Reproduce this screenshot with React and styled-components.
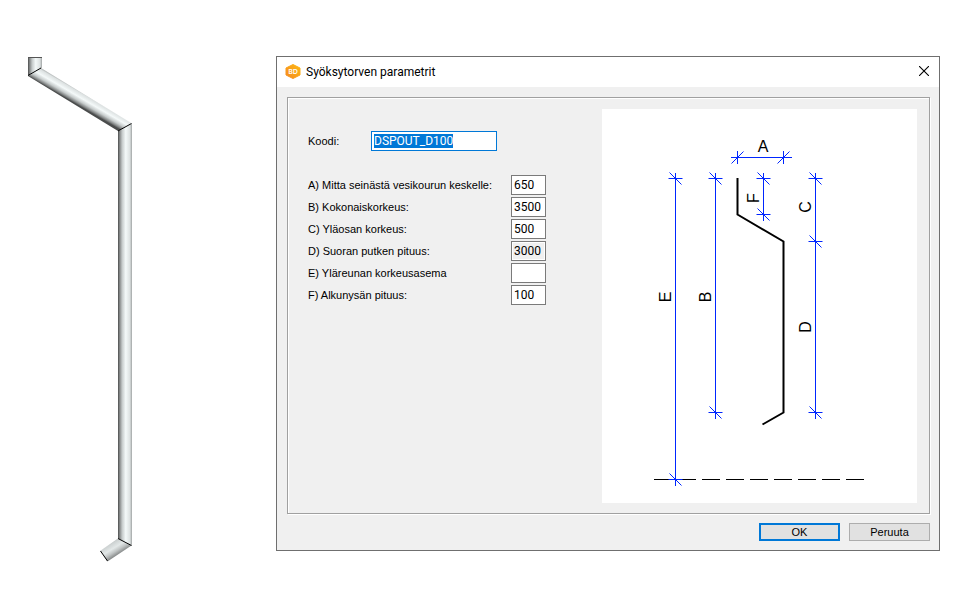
import React, { useEffect, useRef } from "react";
import styled, { createGlobalStyle } from "styled-components";

const GlobalStyle = createGlobalStyle`
  * { box-sizing: border-box; }
  body { margin: 0; background: #ffffff; color: #000000; }
  body, button, input { font-family: "Liberation Sans", Arial, sans-serif; }
`;

const Page = styled.main`
  display: flex;
  align-items: flex-start;
  gap: 144px;
  padding: 56px 27px 24px 28px;
`;

const Pipe = styled.svg`
  flex: none;
  width: 104px;
  height: 506px;
  overflow: visible;
`;

const Dialog = styled.section`
  flex: 1;
  min-width: 0;
  border: 1px solid #6f6f6f;
  background: #f0f0f0;
`;

const TitleBar = styled.header`
  display: flex;
  align-items: center;
  height: 30px;
  padding: 0 8px;
  gap: 5px;
  background: #ffffff;
`;

const Title = styled.h1`
  flex: 1;
  margin: 0;
  font-family: "Roboto", sans-serif;
  font-size: 12px;
  line-height: 16px;
  font-weight: 400;
`;

const AppIcon = styled.svg`
  width: 16px;
  height: 16px;
`;

const CloseButton = styled.button`
  display: flex;
  align-items: center;
  justify-content: center;
  width: 14px;
  height: 16px;
  padding: 0 0 2px;
  border: 0;
  background: transparent;
`;

const Group = styled.div`
  display: flex;
  justify-content: space-between;
  margin: 10px 9px 0 10px;
  padding: 11px 12px 10px 20px;
  border: 1px solid #a0a0a0;
  box-shadow: 1px 1px 0 #ffffff, inset 1px 1px 0 #ffffff;
`;

const Form = styled.form`
  display: flex;
  flex-direction: column;
  gap: 24px;
  padding-top: 22px;
`;

const CodeRow = styled.div`
  display: grid;
  grid-template-columns: 63px 126px;
  align-items: center;
`;

const Fields = styled.div`
  display: grid;
  gap: 2px;
`;

const FieldRow = styled.div`
  display: grid;
  grid-template-columns: 203px 35px;
  align-items: center;
`;

const Label = styled.label`
  font-size: 11px;
  line-height: 16px;
  white-space: nowrap;
`;

const TextBox = styled.input`
  width: 100%;
  height: 20px;
  padding: 0 2px;
  border: 1px solid ${(p) => (p.$active ? "#0078d7" : "#7a7a7a")};
  border-radius: 0;
  outline: 0;
  background: ${(p) => (p.readOnly ? "#f0f0f0" : "#ffffff")};
  box-shadow: ${(p) => (p.readOnly ? "inset 0 0 0 1px #ffffff" : "none")};
  color: #000000;
  font-family: "Roboto", sans-serif;
  font-size: 12px;
  line-height: 16px;

  &::selection {
    background: #0078d7;
    color: #ffffff;
  }
`;

const Diagram = styled.svg`
  flex: none;
  width: 315px;
  height: 394px;
  background: #ffffff;
`;

const DiagramText = styled.text`
  font-family: "Liberation Sans", sans-serif;
  font-size: 16px;
  text-anchor: middle;
`;

const Footer = styled.footer`
  display: flex;
  justify-content: flex-end;
  gap: 9px;
  padding: 9px;
`;

const PushButton = styled.button`
  width: 81px;
  height: 18px;
  padding: 0;
  border: ${(p) => (p.$primary ? "2px solid #0078d7" : "1px solid #adadad")};
  background: #e1e1e1;
  color: #000000;
  font-size: 11px;
  line-height: 14px;
`;

const fields = [
  { id: "a", label: "A) Mitta seinästä vesikourun keskelle:", value: "650" },
  { id: "b", label: "B) Kokonaiskorkeus:", value: "3500" },
  { id: "c", label: "C) Yläosan korkeus:", value: "500" },
  { id: "d", label: "D) Suoran putken pituus:", value: "3000", readOnly: true },
  { id: "e", label: "E) Yläreunan korkeusasema", value: "" },
  { id: "f", label: "F) Alkunysän pituus:", value: "100" },
];

const verticalDimensions = [
  { x: 73, stops: [69, 370] },
  { x: 113, stops: [69, 303] },
  { x: 161, stops: [69, 105] },
  { x: 213, stops: [69, 132, 303] },
];

const letters = [
  { text: "F", x: 157, y: 89 },
  { text: "C", x: 209, y: 98 },
  { text: "E", x: 69, y: 188 },
  { text: "B", x: 109, y: 188 },
  { text: "D", x: 209, y: 218 },
];

function MetalStops() {
  return (
    <>
      <stop offset="0" stopColor="#4a4c4c" />
      <stop offset="0.12" stopColor="#858888" />
      <stop offset="0.3" stopColor="#c6cbcb" />
      <stop offset="0.55" stopColor="#f4f9f9" />
      <stop offset="0.85" stopColor="#dce1e1" />
      <stop offset="1" stopColor="#a0a4a4" />
    </>
  );
}

function Downspout() {
  return (
    <Pipe viewBox="28 56 104 506" role="img" aria-label="Syöksytorvi">
      <defs>
        <linearGradient id="upright" gradientUnits="userSpaceOnUse" x1="118" y1="0" x2="132" y2="0">
          <MetalStops />
        </linearGradient>
        <linearGradient id="inlet" gradientUnits="userSpaceOnUse" x1="28" y1="0" x2="42" y2="0">
          <MetalStops />
        </linearGradient>
        <linearGradient id="slope" gradientUnits="userSpaceOnUse" x1="28" y1="76" x2="35" y2="64">
          <MetalStops />
        </linearGradient>
        <linearGradient id="outlet" gradientUnits="userSpaceOnUse" x1="107" y1="532" x2="120" y2="553">
          <stop offset="0.3" stopColor="#777a7a" />
          <stop offset="0.5" stopColor="#cdd2d2" />
          <stop offset="0.7" stopColor="#e3e8e8" />
          <stop offset="0.85" stopColor="#c0c4c4" />
          <stop offset="1" stopColor="#8a8d8d" />
        </linearGradient>
      </defs>
      <path d="M28 57H42V68L28 76Z" fill="url(#inlet)" />
      <path d="M28 57.5H42" stroke="#555" />
      <path d="M28 76L41 68L132 123.5L118 131Z" fill="url(#slope)" />
      <path d="M118 131L132 123.5V545.5L118 538.5Z" fill="url(#upright)" />
      <path d="M118 538.5L131.5 545.5L107.5 561.5L100 551Z" fill="url(#outlet)" />
      <path d="M28 75.5L41 68M118 131L131.5 123.5M118 538.5L131.5 545.5M100.5 551L107.5 561" stroke="#000" />
    </Pipe>
  );
}

function VerticalDimension({ x, stops }) {
  return (
    <g stroke="#0026ff" transform={`translate(${x}.5 .5)`}>
      <path d={`M0 ${stops[0] - 6}V${stops[stops.length - 1] + 6}`} shapeRendering="crispEdges" />
      {stops.map((y) => (
        <path key={y} d={`M-7 ${y}H7M-6 ${y - 6}L6 ${y + 6}`} />
      ))}
    </g>
  );
}

function SpoutDiagram() {
  return (
    <Diagram viewBox="0 0 315 394" role="img" aria-label="Mitat A–F" fill="none">
      <path d="M52 370.5H262" stroke="#000" strokeDasharray="18 6" />
      <path d="M52 370.5H92" stroke="#000" />
      {verticalDimensions.map((d) => (
        <VerticalDimension key={d.x} {...d} />
      ))}
      <path
        d="M129 48.5H190M135.5 42V55M181.5 42V55M129.5 54.5L141.5 42.5M175.5 54.5L187.5 42.5"
        stroke="#0026ff"
      />
      <path d="M135.5 69V105.5L181.5 132.5V303.5L160.5 315.5" stroke="#000" strokeWidth="2" />
      <DiagramText x="161" y="43" fill="#000">A</DiagramText>
      {letters.map(({ text, x, y }) => (
        <DiagramText key={text} fill="#000" transform={`translate(${x} ${y}) rotate(-90)`}>
          {text}
        </DiagramText>
      ))}
    </Diagram>
  );
}

export default function App() {
  const codeRef = useRef(null);

  useEffect(() => {
    codeRef.current.focus();
    codeRef.current.select();
  }, []);

  return (
    <>
      <GlobalStyle />
      <Page>
        <Downspout />
        <Dialog role="dialog" aria-labelledby="dialog-title">
          <TitleBar>
            <AppIcon viewBox="0 0 16 16" aria-hidden="true">
              <defs>
                <linearGradient id="badge" x1="0" y1="1" x2="1" y2="0">
                  <stop offset="0" stopColor="#f58a1f" />
                  <stop offset="1" stopColor="#fdb813" />
                </linearGradient>
              </defs>
              <path d="M8 0.5L15 4V11L8 14.5L1 11V4Z" fill="url(#badge)" stroke="url(#badge)" strokeLinejoin="round" />
              <text x="8" y="10" textAnchor="middle" fontFamily="Open Sans" fontWeight="600" fontSize="7" fill="#fff">BD</text>
            </AppIcon>
            <Title id="dialog-title">Syöksytorven parametrit</Title>
            <CloseButton type="button" aria-label="Sulje">
              <svg width="10" height="10" viewBox="0 0 10 10" aria-hidden="true">
                <path d="M0 0L10 10M10 0L0 10" stroke="#000" strokeWidth="1.1" />
              </svg>
            </CloseButton>
          </TitleBar>
          <Group>
            <Form id="spout-form" onSubmit={(e) => e.preventDefault()}>
              <CodeRow>
                <Label htmlFor="code">Koodi:</Label>
                <TextBox id="code" ref={codeRef} $active defaultValue="DSPOUT_D100" />
              </CodeRow>
              <Fields>
                {fields.map(({ id, label, value, readOnly }) => (
                  <FieldRow key={id}>
                    <Label htmlFor={id}>{label}</Label>
                    <TextBox id={id} defaultValue={value} readOnly={readOnly} />
                  </FieldRow>
                ))}
              </Fields>
            </Form>
            <SpoutDiagram />
          </Group>
          <Footer>
            <PushButton type="submit" form="spout-form" $primary>OK</PushButton>
            <PushButton type="button">Peruuta</PushButton>
          </Footer>
        </Dialog>
      </Page>
    </>
  );
}
